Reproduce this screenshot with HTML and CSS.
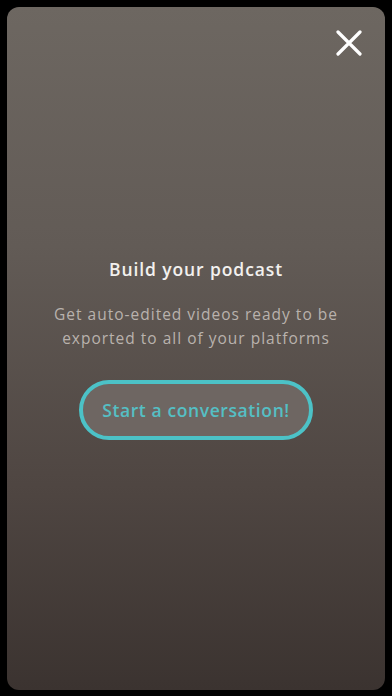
FILE: index.html
```html
<!DOCTYPE html>
<html lang="en">
<head>
<meta charset="utf-8">
<title>Build your podcast</title>
<link rel="stylesheet" href="styles.css">
</head>
<body>
<div class="card">
  <div class="top-row">
    <button class="close" aria-label="Close">
      <svg width="26" height="26" viewBox="0 0 26 26"><path d="M2 2 L24 24 M24 2 L2 24" stroke="#fff" stroke-width="3.2" stroke-linecap="round" fill="none"/></svg>
    </button>
  </div>
  <div class="content">
    <h1 class="title">Build your podcast</h1>
    <p class="subtitle">Get auto-edited videos ready to be<br>exported to all of your platforms</p>
    <button class="cta">Start a conversation!</button>
  </div>
</div>
</body>
</html>
```
FILE: styles.css
```css
html, body {
  margin: 0;
  padding: 0;
  background: #000;
}
body {
  width: 392px;
  height: 696px;
  padding: 7px 7px 6px 7px;
  box-sizing: border-box;
  font-family: "Open Sans", Lato, sans-serif;
}
.card {
  height: 683px;
  border-radius: 12px;
  background: linear-gradient(180deg, #6d6761 0%, #625b56 35%, #4f4642 70%, #3b3330 100%);
  display: flex;
  flex-direction: column;
  align-items: center;
}
.top-row {
  align-self: stretch;
  display: flex;
  justify-content: flex-end;
  padding: 23px 23px 0 0;
}
.close {
  background: none;
  border: 0;
  padding: 0;
  width: 26px;
  height: 26px;
  display: flex;
}
.content {
  margin-top: 201px;
  display: flex;
  flex-direction: column;
  align-items: center;
}
.title {
  margin: 0;
  font-size: 17.5px;
  line-height: 24px;
  font-weight: 600;
  letter-spacing: 0.9px;
  color: #f2f0ee;
}
.subtitle {
  margin: 21px 0 0;
  font-size: 15.5px;
  line-height: 24px;
  font-weight: 400;
  letter-spacing: 1px;
  color: #b9b2ad;
  text-align: center;
}
.cta {
  margin-top: 30px;
  width: 234px;
  height: 60px;
  border: 4px solid #4cc2c7;
  border-radius: 30px;
  background: #6e6662;
  color: #55bfc4;
  font-family: "Open Sans", Lato, sans-serif;
  font-size: 17.5px;
  font-weight: 600;
  letter-spacing: 0.6px;
  padding: 0;
}
```
